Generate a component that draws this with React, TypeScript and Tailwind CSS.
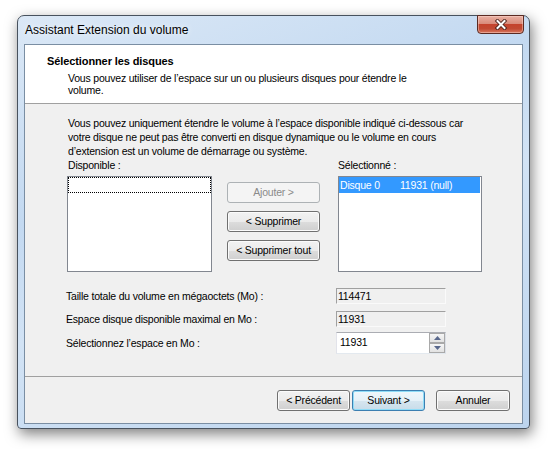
import clsx from "clsx";

const ui = "font-['Liberation_Sans',Arial,sans-serif]";

const Btn = ({
  children,
  disabled,
  def,
  className,
}: {
  children: React.ReactNode;
  disabled?: boolean;
  def?: boolean;
  className?: string;
}) => (
  <button
    className={clsx(
      "h-[21px] rounded-[3px] border leading-none",
      disabled
        ? "border-[#adb2b5] bg-[#f4f4f4] text-[#8a8a8a]"
        : def
        ? "text-black border-[#3c7fb1] bg-[linear-gradient(#eef7fc_0%,#e6f1f8_50%,#d6e6f0_50%,#c8dce9_100%)] shadow-[inset_0_0_0_1px_#8fdcf7]"
        : "text-black border-[#707070] bg-[linear-gradient(#f2f2f2_0%,#ebebeb_50%,#dddddd_50%,#cfcfcf_100%)] shadow-[inset_0_0_0_1px_#fbfbfb]",
      className
    )}
  >
    {children}
  </button>
);

const ReadOnlyBox = ({ value }: { value: string }) => (
  <div className="w-[110px] h-[16px] border border-t-[#a0a0a0] border-l-[#a0a0a0] border-r-[#fafafa] border-b-[#fafafa] bg-[#f0f0f0] pl-[1px] leading-[14px]">
    {value}
  </div>
);

const SpinBtn = ({ up }: { up?: boolean }) => (
  <div className="flex-1 w-[16px] flex items-center justify-center border border-[#a9a9a9] bg-[linear-gradient(#f6f6f6,#e2e2e2)]">
    <svg width="7" height="4" viewBox="0 0 7 4">
      <path d={up ? "M0 4 L3.5 0 L7 4 Z" : "M0 0 L3.5 4 L7 0 Z"} fill="#59688c" />
    </svg>
  </div>
);

const App = () => {
  return (
    <div className={clsx("w-[549px] h-[449px] bg-white overflow-hidden pt-[15px] pl-[17px]", ui)}>
      <div className="w-[513px] h-[414px] flex flex-col rounded-t-[7px] rounded-b-[4px] border border-[#48525e] bg-[linear-gradient(160deg,#dbe8f6_0%,#c3d9f1_35%,#d2e3f5_55%,#bcd4ee_100%)] shadow-[2px_5px_14px_rgba(0,0,0,0.5)] px-[6px] pb-[4px]">
        {/* title bar */}
        <div className="h-[28px] flex justify-between items-start">
          <span className="mt-[6px] ml-[1px] text-[12px] leading-[16px] text-black [text-shadow:0_0_6px_#ffffff]">
            Assistant Extension du volume
          </span>
          <div className="-mt-px -mr-px w-[47px] h-[19px] rounded-b-[4px] border border-[#5a2a22] bg-[linear-gradient(#e9b0a3_0%,#d98c7b_45%,#c4432d_50%,#c14a33_75%,#d9785f_100%)] shadow-[inset_0_0_0_1px_rgba(255,220,210,0.45)] flex items-center justify-center">
            <svg width="14" height="11" viewBox="0 0 14 11">
              <path d="M3.5 2 L10.5 9 M10.5 2 L3.5 9" stroke="#4b231c" strokeWidth="3.8" strokeLinecap="square" />
              <path d="M3.5 2 L10.5 9 M10.5 2 L3.5 9" stroke="#ffffff" strokeWidth="2" strokeLinecap="square" />
            </svg>
          </div>
        </div>

        {/* client area */}
        <div className="flex-1 flex flex-col border border-[#7a8ea3] bg-[#f0f0f0] text-[10.5px] tracking-[-0.2px] leading-[13px] text-black">
          <div className="h-[59px] bg-white border-b border-[#a0a0a0] pt-[10px] pl-[22px]">
            <div className="font-bold text-[11px] tracking-[-0.1px]">Sélectionner les disques</div>
            <div className="mt-[4px] ml-[21px] leading-[12px]">
              Vous pouvez utiliser de l’espace sur un ou plusieurs disques pour étendre le
              <br />
              volume.
            </div>
          </div>

          <div className="flex-1 pl-[42px] pt-[12px]">
            <p className="ml-[1px] leading-[14px]">
              Vous pouvez uniquement étendre le volume à l’espace disponible indiqué ci-dessous car
              <br />
              votre disque ne peut pas être converti en disque dynamique ou le volume en cours
              <br />
              d’extension est un volume de démarrage ou système.
            </p>

            <div className="mt-[1px] flex">
              <div className="w-[145px]">
                <div className="ml-[1px]">Disponible :</div>
                <div className="mt-[4px] h-[96px] border border-[#828790] bg-white">
                  <div className="h-[16px] border border-dotted border-black" />
                </div>
              </div>
              <div className="ml-[15px] w-[93px] pt-[23px] flex flex-col gap-[8px]">
                <Btn disabled>Ajouter &gt;</Btn>
                <Btn>&lt; Supprimer</Btn>
                <Btn>&lt; Supprimer tout</Btn>
              </div>
              <div className="ml-[18px] w-[144px]">
                <div>Sélectionné :</div>
                <div className="mt-[4px] h-[96px] border border-[#828790] bg-white">
                  <div className="h-[16px] bg-[#3399ff] text-white flex items-center pl-[1px] mr-px">
                    <span className="w-[60px]">Disque 0</span>
                    <span>11931 (null)</span>
                  </div>
                </div>
              </div>
            </div>

            <div className="mt-[16px] grid grid-cols-[270px_110px] items-center gap-y-[7px] -ml-[1px]">
              <span>Taille totale du volume en mégaoctets (Mo) :</span>
              <ReadOnlyBox value="114471" />
              <span>Espace disque disponible maximal en Mo :</span>
              <ReadOnlyBox value="11931" />
              <span className="-mt-[2px]">Sélectionnez l’espace en Mo :</span>
              <div className="-mt-[2px] w-[110px] h-[22px] flex border border-t-[#abadb3] border-l-[#e2e3ea] border-r-[#dbdfe6] border-b-[#e3e9ef] bg-white">
                <span className="flex-1 pl-[3px] pt-[3px]">11931</span>
                <div className="flex flex-col w-[16px]">
                  <SpinBtn up />
                  <SpinBtn />
                </div>
              </div>
            </div>
          </div>

          <div className="h-[47px] border-t border-[#a0a0a0] pt-[13px] pr-[12px] flex justify-end">
            <Btn className="w-[73px]">&lt; Précédent</Btn>
            <Btn def className="w-[73px] ml-[2px]">Suivant &gt;</Btn>
            <Btn className="w-[74px] ml-[11px]">Annuler</Btn>
          </div>
        </div>
      </div>
    </div>
  );
};

export default App;
